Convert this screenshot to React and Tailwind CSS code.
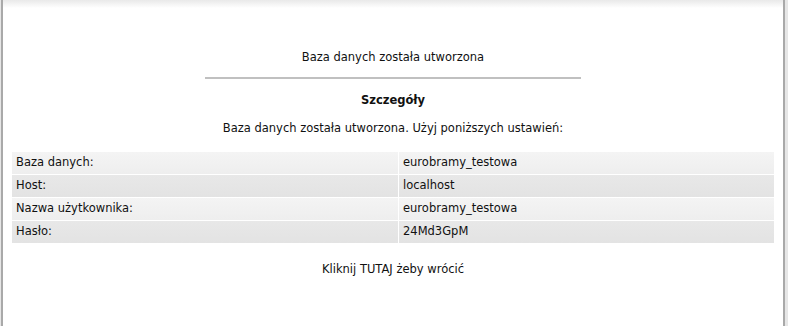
export default function App() {
    const rows = [
        ["Baza danych:", "eurobramy_testowa"],
        ["Host:", "localhost"],
        ["Nazwa użytkownika:", "eurobramy_testowa"],
        ["Hasło:", "24Md3GpM"],
    ];

    return (
        <div className="h-[326px] w-[788px] flex bg-[#e6e6e6] font-['DejaVu_Sans',sans-serif] text-[11.5px] text-[#111]">
            {/* Frame */}
            <div className="w-[784px] h-full border-l-2 border-r-2 border-[#a9a9a9] bg-white ml-px flex flex-col">
                <div className="h-[8px] bg-linear-to-b from-[#e9e9e9] to-white" />

                <div className="flex flex-col items-center">
                    <p className="mt-[42px] leading-[14px]">Baza danych została utworzona</p>
                    <div className="mt-[13px] w-[376px] h-[2px] bg-[#c0c0c0]" />
                    <h2 className="mt-[14px] font-bold leading-[14px]">Szczegóły</h2>
                    <p className="mt-[14px] leading-[14px]">
                        Baza danych została utworzona. Użyj poniższych ustawień:
                    </p>
                </div>

                {/* Settings table */}
                <div className="mt-[17px] mx-[9px] flex flex-col gap-px">
                    {rows.map(([label, value], i) => {
                        const bg = i % 2 === 0
                            ? "bg-linear-to-b from-[#f4f4f4] to-[#eeeeee]"
                            : "bg-linear-to-b from-[#e8e8e8] to-[#e3e3e3]";
                        return (
                            <div key={label} className="flex gap-px h-[22px]">
                                <div className={`w-[386px] px-[4px] flex items-center ${bg}`}>{label}</div>
                                <div className={`flex-1 px-[4px] flex items-center ${bg}`}>{value}</div>
                            </div>
                        );
                    })}
                </div>

                <p className="mt-[19px] text-center leading-[14px]">Kliknij TUTAJ żeby wrócić</p>
            </div>
        </div>
    );
}
